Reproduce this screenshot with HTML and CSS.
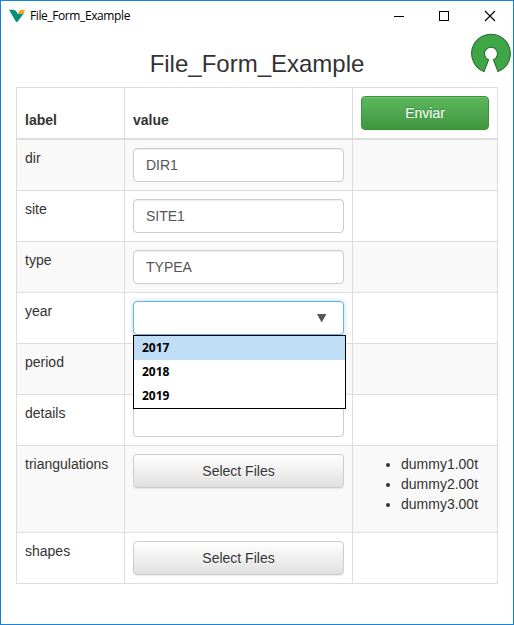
FILE: index.html
```html
<!DOCTYPE html>
<html lang="en">
<head>
<meta charset="utf-8">
<title>File_Form_Example</title>
<link rel="stylesheet" href="styles.css">
</head>
<body>
<div class="window">
  <header class="titlebar">
    <svg class="app-icon" width="17" height="14" viewBox="0 0 17 14"><path d="M0 .8H4.500Q7.500 1.200 8.500 4.800Q11 5 15 4L9 12.200Q7.800 13.800 6.500 12Z" fill="#068f7d"/><path d="M16 .8Q15.500 3.300 14.500 4.100Q11.500 5.400 8.800 4.800Q9.500 1.300 13 .8Z" fill="#efaa20"/></svg>
    <span class="app-name">File_Form_Example</span>
    <svg class="controls" width="103" height="12" viewBox="0 0 103 12" fill="none" stroke="#000"><path d="M0 6.500H10M45.500 1.500H54.500V10.500H45.500Z" shape-rendering="crispEdges"/><path d="M91 1L101 11M101 1L91 11" stroke-width="1.100"/></svg>
  </header>
  <svg class="brand" width="42" height="42" viewBox="0 0 42 42"><path d="M14 38.500A19.300 19.300 0 1 1 28 38.500L23.500 26.700A6.500 6.500 0 1 0 18.500 26.700Z" fill="#3fa648" stroke="#286b30" stroke-width="1.100"/></svg>
  <h3 class="heading">File_Form_Example</h3>
  <table class="form-table">
    <colgroup><col class="col-label"><col class="col-value"><col class="col-info"></colgroup>
    <thead>
      <tr><th>label</th><th>value</th><th><button class="btn btn-success">Enviar</button></th></tr>
    </thead>
    <tbody>
      <tr><td>dir</td><td><input class="field" type="text" value="DIR1"></td><td></td></tr>
      <tr><td>site</td><td><input class="field" type="text" value="SITE1"></td><td></td></tr>
      <tr><td>type</td><td><input class="field" type="text" value="TYPEA"></td><td></td></tr>
      <tr><td>year</td><td>
        <div class="field select open">
          <svg class="arrow" width="10" height="9" viewBox="0 0 10 9"><path d="M0 0H9.400L4.700 8.500Z" fill="#555"/></svg>
          <ul class="options"><li class="active">2017</li><li>2018</li><li>2019</li></ul>
        </div>
      </td><td></td></tr>
      <tr><td>period</td><td><input class="field" type="text"></td><td></td></tr>
      <tr><td>details</td><td><input class="field" type="text"></td><td></td></tr>
      <tr><td>triangulations</td><td><button class="btn btn-default">Select Files</button></td><td><ul class="files"><li>dummy1.00t</li><li>dummy2.00t</li><li>dummy3.00t</li></ul></td></tr>
      <tr><td>shapes</td><td><button class="btn btn-default">Select Files</button></td><td></td></tr>
    </tbody>
  </table>
</div>
</body>
</html>
```
FILE: styles.css
```css
* { box-sizing: border-box; }
body {
  margin: 0;
  color: #333;
  background: #fff;
  font: 14px/20px "Liberation Sans", Arial, sans-serif;
}
.window {
  position: relative;
  height: 625px;
  border: 1px solid #1883d7;
  padding: 0 15px;
  overflow: hidden;
}
.titlebar {
  display: flex;
  align-items: center;
  height: 29px;
  margin: 0 -15px;
  padding: 0 16px 0 8px;
}
.app-icon { flex: none; }
.app-name {
  margin-left: 4px;
  color: #000;
  font: 12px/16px "Open Sans", "Noto Sans", sans-serif;
  letter-spacing: -0.4px;
}
.controls { margin-left: auto; }
.brand { position: absolute; left: 469px; top: 32px; }
.heading {
  margin: 20px 0 10px;
  font-size: 24px;
  line-height: 27px;
  font-weight: 400;
  text-align: center;
}
.form-table {
  width: 482px;
  table-layout: fixed;
  border-collapse: separate;
  border-spacing: 0;
  border: solid #ddd;
  border-width: 1px 0 0 1px;
}
.col-label { width: 108px; }
.col-value { width: 228px; }
.col-info { width: 145px; }
th, td {
  padding: 8px;
  border: solid #ddd;
  border-width: 0 1px 1px 0;
  text-align: left;
  vertical-align: top;
}
th { vertical-align: bottom; border-bottom-width: 2px; }
tbody tr:nth-child(odd) { background: #f9f9f9; }
.field, .btn {
  display: block;
  width: 100%;
  height: 34px;
  padding: 6px 12px;
  border: 1px solid #ccc;
  border-radius: 4px;
  font: inherit;
}
.field {
  color: #555;
  background: #fff;
  box-shadow: inset 0 1px 1px rgba(0, 0, 0, .075);
}
.btn { font-weight: 400; text-align: center; }
.btn-default {
  color: #333;
  background: linear-gradient(#fff, #e0e0e0);
  text-shadow: 0 1px 0 #fff;
  box-shadow: inset 0 1px 0 rgba(255, 255, 255, .15), 0 1px 1px rgba(0, 0, 0, .075);
}
.btn-success {
  color: #fff;
  background: linear-gradient(#5cb85c, #419641);
  border-color: #3e8f3e;
  text-shadow: 0 -1px 0 rgba(0, 0, 0, .2);
  box-shadow: inset 0 1px 0 rgba(255, 255, 255, .15), 0 1px 1px rgba(0, 0, 0, .075);
}
.select {
  position: relative;
  display: flex;
  justify-content: flex-end;
  align-items: center;
  padding-right: 16px;
}
.select.open {
  border-color: #66afe9;
  box-shadow: 0 0 5px rgba(102, 175, 233, .45);
}
.options {
  position: absolute;
  z-index: 1;
  left: -1px;
  top: 33px;
  width: 213px;
  margin: 0;
  padding: 0;
  border: 1px solid #000;
  background: #fff;
  color: #000;
  list-style: none;
  font: 700 12px/24px "Open Sans", "Noto Sans", sans-serif;
}
.options li { height: 24px; padding-left: 8px; }
.options .active { background: #bfddf5; }
.files { margin: 0 0 10px; padding-left: 40px; }
```
